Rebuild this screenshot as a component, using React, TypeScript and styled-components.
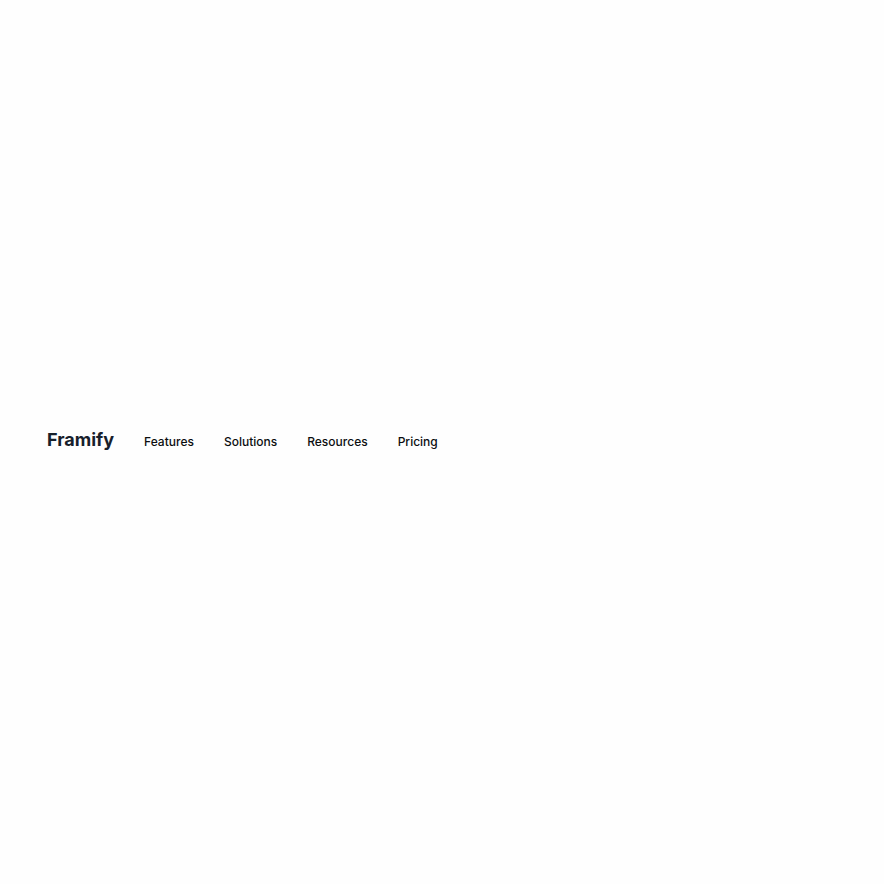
import React from "react";
import styled, { createGlobalStyle } from "styled-components";

export default function App() {
  const links = ["Features", "Solutions", "Resources", "Pricing"];
  return (
    <Page>
      <GlobalStyle />
      <Header>
        <Logo href="#">Framify</Logo>
        <nav>
          <ul>
            {links.map((item) => (
              <li key={item}>
                <a href={`#${item.toLowerCase()}`}>{item}</a>
              </li>
            ))}
          </ul>
        </nav>
      </Header>
    </Page>
  );
}

const GlobalStyle = createGlobalStyle`
  * {
    box-sizing: border-box;
    margin: 0;
    padding: 0;
  }
  body {
    background-color: #fefefe;
    color: #0c0e10;
    font-family: Inter, sans-serif;
  }
  a {
    color: inherit;
    text-decoration: none;
  }
`;

const Page = styled.div`
  min-height: 100vh;
  display: flex;
  align-items: center;
`;

const Header = styled.header`
  width: 100%;
  display: flex;
  align-items: baseline;
  gap: 30px;
  padding: 0 47px 4px;

  ul {
    display: flex;
    gap: 30px;
    list-style: none;
  }
  li {
    font-size: 12px;
    font-weight: 500;
    line-height: 20px;
  }
`;

const Logo = styled.a`
  color: #17202b;
  font-size: 18px;
  font-weight: 700;
  line-height: 24px;
`;
